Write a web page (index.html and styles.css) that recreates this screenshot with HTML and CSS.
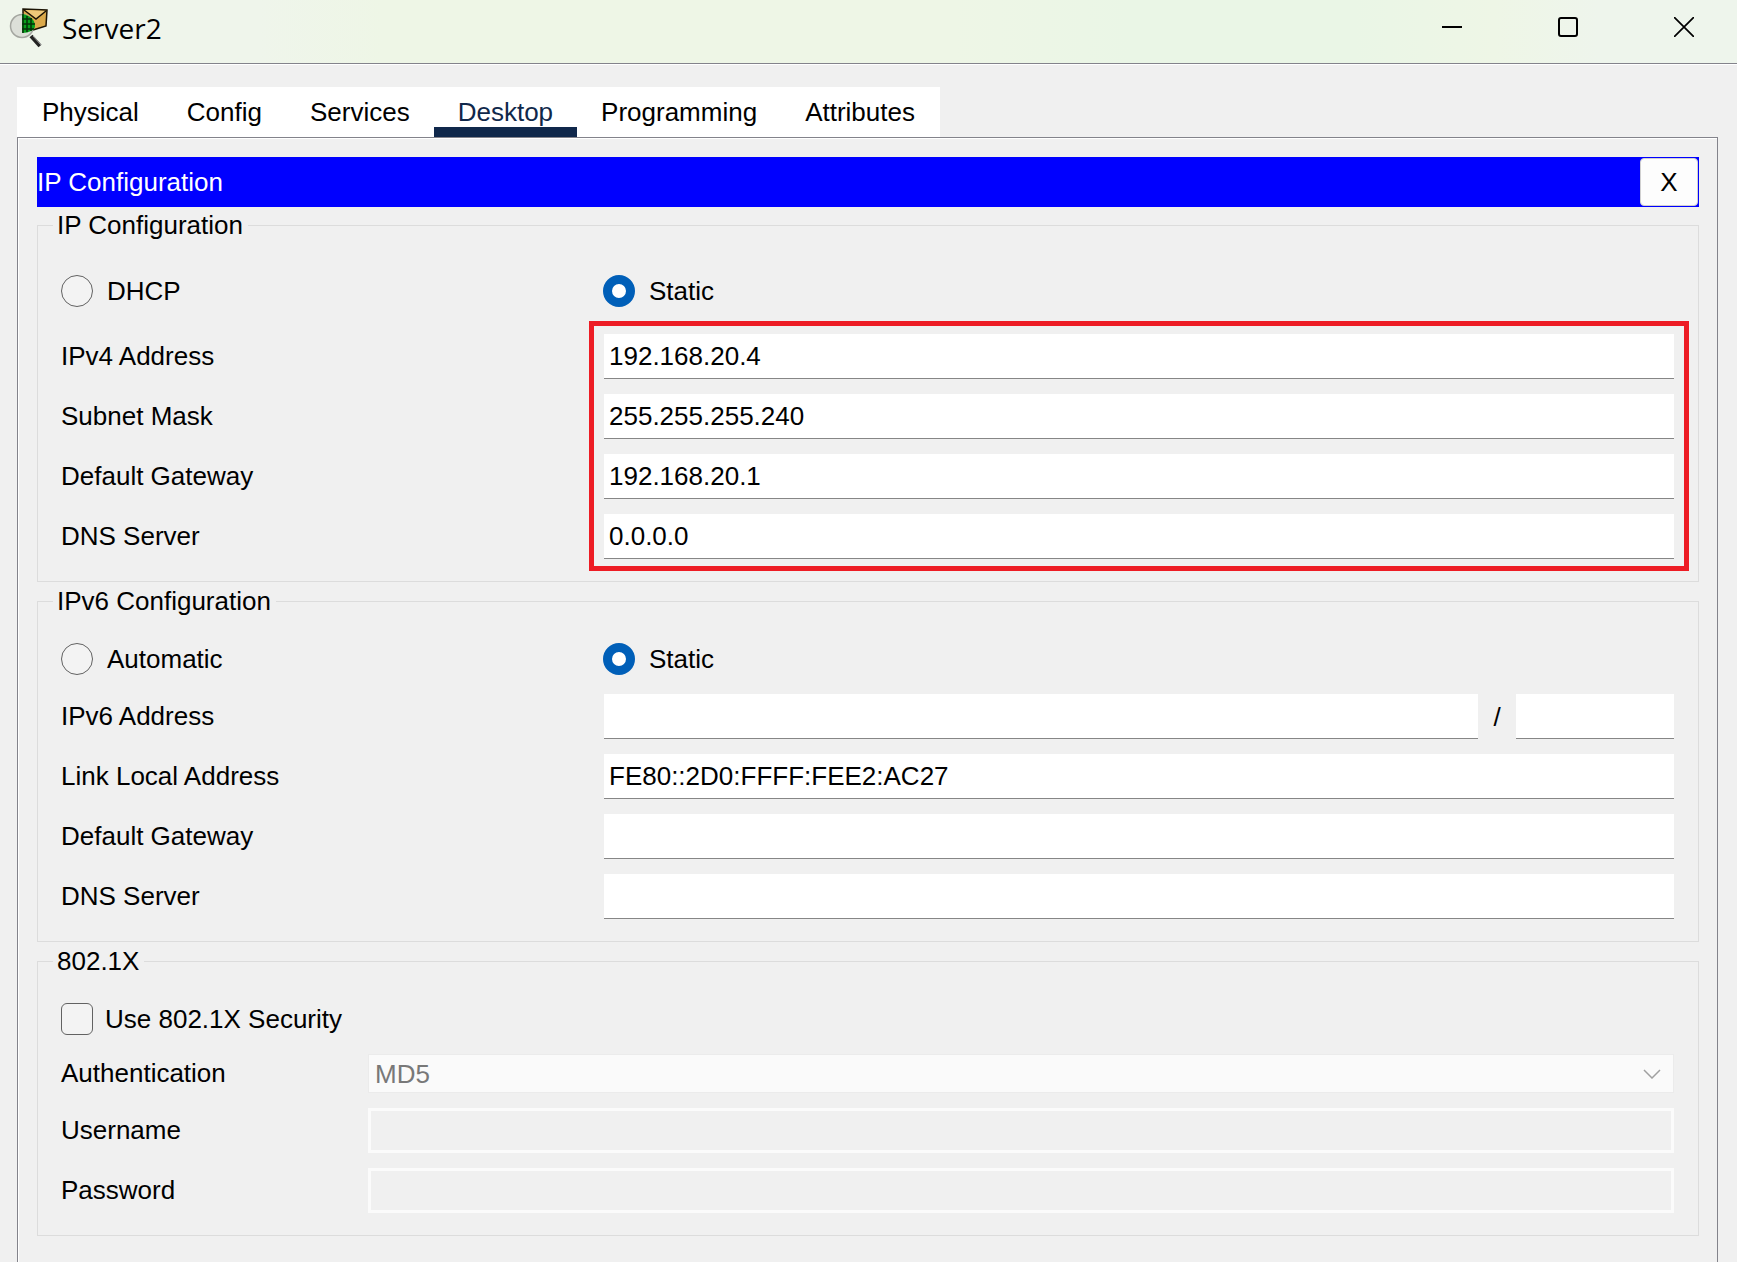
FILE: index.html
```html
<!DOCTYPE html>
<html lang="en">
<head>
    <meta charset="UTF-8">
    <meta name="viewport" content="width=device-width, initial-scale=1.0">
    <title>Server2</title>
    <link rel="stylesheet" href="styles.css">
</head>
<body>
    <header class="titlebar">
        <svg class="app-icon" viewBox="0 0 40 40">
            <path d="M14 1 L38 2 L37 18 L24 22 L14 26 Z" fill="#dba94a" stroke="#1c1405" stroke-width="1.5"/>
            <path d="M15 2 L27 11 L37 3" fill="#efc878" stroke="#1c1405" stroke-width="1.5"/>
            <circle cx="13" cy="18" r="11.5" fill="#dcdfd8" stroke="#a4a6a0" stroke-width="1.5"/>
            <path d="M13 6 C21 7 26 12 26 18 C26 22 20 25 13 25 Z" fill="#06a01a"/>
            <path d="M14 6 V25 M18 8 V24 M22 10 V23 M13 11 H23 M13 16 H26 M13 21 H25" stroke="#06300a" stroke-width="1.5" fill="none"/>
            <path d="M22 28 L31 38" stroke="#222" stroke-width="4"/>
            <path d="M24 28 L32 37" stroke="#999" stroke-width="1"/>
        </svg>
        <h1>Server2</h1>
        <div class="window-buttons">
            <button type="button" aria-label="Minimize"><svg viewBox="0 0 20 20"><path d="M0 10 H20" stroke-width="2"/></svg></button>
            <button type="button" aria-label="Maximize"><svg viewBox="0 0 20 20"><rect x="1" y="1" width="18" height="18" rx="2" stroke-width="2"/></svg></button>
            <button type="button" aria-label="Close"><svg viewBox="0 0 20 20"><path d="M0 0 L20 20 M20 0 L0 20" stroke-width="1.7"/></svg></button>
        </div>
    </header>

    <main class="content">
        <nav class="tabs">
            <button type="button">Physical</button>
            <button type="button">Config</button>
            <button type="button">Services</button>
            <button type="button" class="active">Desktop</button>
            <button type="button">Programming</button>
            <button type="button">Attributes</button>
        </nav>

        <form class="panel">
            <div class="panel-title">
                <h2>IP Configuration</h2>
                <button type="button">X</button>
            </div>

            <fieldset class="ipv4">
                <legend>IP Configuration</legend>
                <div class="options">
                    <label><input type="radio" name="ipv4-mode"> DHCP</label>
                    <label><input type="radio" name="ipv4-mode" checked> Static</label>
                </div>
                <div class="rows highlight">
                    <div class="row">
                        <label for="ipv4">IPv4 Address</label>
                        <input type="text" id="ipv4" value="192.168.20.4">
                    </div>
                    <div class="row">
                        <label for="mask">Subnet Mask</label>
                        <input type="text" id="mask" value="255.255.255.240">
                    </div>
                    <div class="row">
                        <label for="gateway">Default Gateway</label>
                        <input type="text" id="gateway" value="192.168.20.1">
                    </div>
                    <div class="row">
                        <label for="dns">DNS Server</label>
                        <input type="text" id="dns" value="0.0.0.0">
                    </div>
                </div>
            </fieldset>

            <fieldset>
                <legend>IPv6 Configuration</legend>
                <div class="options">
                    <label><input type="radio" name="ipv6-mode"> Automatic</label>
                    <label><input type="radio" name="ipv6-mode" checked> Static</label>
                </div>
                <div class="rows">
                    <div class="row">
                        <label for="ipv6">IPv6 Address</label>
                        <div class="address">
                            <input type="text" id="ipv6">
                            <span>/</span>
                            <input type="text" class="prefix" aria-label="Prefix length">
                        </div>
                    </div>
                    <div class="row">
                        <label for="link-local">Link Local Address</label>
                        <input type="text" id="link-local" value="FE80::2D0:FFFF:FEE2:AC27">
                    </div>
                    <div class="row">
                        <label for="gateway6">Default Gateway</label>
                        <input type="text" id="gateway6">
                    </div>
                    <div class="row">
                        <label for="dns6">DNS Server</label>
                        <input type="text" id="dns6">
                    </div>
                </div>
            </fieldset>

            <fieldset class="security">
                <legend>802.1X</legend>
                <div class="options">
                    <label><input type="checkbox"> Use 802.1X Security</label>
                </div>
                <div class="rows">
                    <div class="row">
                        <label for="auth">Authentication</label>
                        <div class="select">
                            <select id="auth" disabled>
                                <option>MD5</option>
                            </select>
                            <svg viewBox="0 0 18 10"><path d="M1 1 L9 9 L17 1"/></svg>
                        </div>
                    </div>
                    <div class="row">
                        <label for="username">Username</label>
                        <input type="text" id="username" disabled>
                    </div>
                    <div class="row">
                        <label for="password">Password</label>
                        <input type="password" id="password" disabled>
                    </div>
                </div>
            </fieldset>
        </form>
    </main>
</body>
</html>
```
FILE: styles.css
```css
* {
    box-sizing: border-box;
}

body {
    margin: 0;
    min-height: 100vh;
    display: flex;
    flex-direction: column;
    background: #f0f0f0;
    color: #000;
    font-family: "Liberation Sans", Arial, sans-serif;
    font-size: 26px;
    line-height: 30px;
}

button,
input,
select {
    font: inherit;
    color: inherit;
    margin: 0;
}

h1,
h2 {
    margin: 0;
    font-weight: normal;
}

/* title bar */
.titlebar {
    display: flex;
    align-items: center;
    height: 65px;
    padding: 0 23px 8px 9px;
    background: linear-gradient(to right, #eff5eb, #eff5eb 15%, #eef6e6 22%, #eef6e6 55%, #eaf6e6 65%, #eaf6e6 78%, #eef6e6 86%, #eef5ec 92%);
    border-bottom: 1px solid #fff;
    box-shadow: inset 0 -1px #83838b;
}

.app-icon {
    width: 40px;
    height: 40px;
}

.titlebar h1 {
    margin-left: 13px;
    font-family: "Open Sans", "Noto Sans", sans-serif;
    font-size: 28px;
}

.window-buttons {
    display: flex;
    gap: 56px;
    margin-left: auto;
    padding-bottom: 2px;
}

.window-buttons button {
    display: flex;
    justify-content: center;
    width: 60px;
    padding: 0;
    border: none;
    background: none;
}

.window-buttons svg {
    width: 20px;
    height: 20px;
    fill: none;
    stroke: #000;
}

/* tabs */
.content {
    flex: 1;
    display: flex;
    flex-direction: column;
    align-items: stretch;
    padding: 22px 19px 0 17px;
}

.tabs {
    display: flex;
    align-self: flex-start;
    padding: 0 1px;
    background: #fff;
}

.tabs button {
    height: 50px;
    padding: 0 24px;
    border: none;
    background: none;
}

.tabs .active {
    color: #10284b;
    box-shadow: inset 0 -10px #10284b;
}

.panel {
    flex: 1;
    padding: 19px 18px 26px 19px;
    border: 1px solid #83838b;
    border-bottom: none;
    box-shadow: inset 1px 1px #fff;
}

.panel-title {
    display: flex;
    align-items: center;
    justify-content: space-between;
    height: 50px;
    margin-bottom: 4px;
    padding: 1px 1px 1px 0;
    background: #0000ff;
    color: #fff;
}

.panel-title h2 {
    font-size: 26px;
}

.panel-title button {
    width: 58px;
    height: 48px;
    padding: 0;
    border: 1px solid #d0d0d0;
    border-radius: 4px;
    background: #fdfdfd;
    color: #000;
}

/* groups */
fieldset {
    min-width: 0;
    margin: 0 0 5px;
    padding: 27px 24px 22px 23px;
    border: 1px solid #dcdcdc;
}

fieldset.ipv4 {
    padding-top: 35px;
}

legend {
    margin-left: -8px;
    padding: 0 5px 0 4px;
    line-height: 29px;
}

.options,
.row {
    display: grid;
    grid-template-columns: 543px 1fr;
    align-items: center;
}

.options {
    grid-template-columns: 542px 1fr;
    margin-bottom: 19px;
}

.ipv4 .options {
    margin-bottom: 27px;
}

.options label {
    display: flex;
    align-items: center;
    gap: 14px;
    height: 32px;
    white-space: nowrap;
}

.security .options label {
    gap: 12px;
}

.rows {
    display: grid;
    gap: 15px;
}

.row > label {
    padding-bottom: 2px;
}

.security .row {
    grid-template-columns: 307px 1fr;
}

input[type="radio"],
input[type="checkbox"] {
    appearance: none;
    width: 32px;
    height: 32px;
    border: 1px solid #626262;
    border-radius: 50%;
    background: #f3f3f3;
}

input[type="checkbox"] {
    border-radius: 6px;
}

input[type="radio"]:checked {
    border: 9px solid #005fb8;
    background: #fff;
}

input[type="text"],
input[type="password"] {
    width: 100%;
    min-width: 0;
    height: 45px;
    padding: 0 5px;
    border: none;
    border-bottom: 1px solid #868686;
    background: #fff;
}

input[type="text"]:disabled,
input[type="password"]:disabled {
    border: 3px solid #fbfbfb;
    background: #f0f0f0;
}

.address {
    display: flex;
    align-items: center;
}

.address span {
    flex: 0 0 38px;
    text-align: center;
}

.address .prefix {
    flex: 0 0 158px;
    width: 158px;
}

.select {
    position: relative;
}

.select select {
    display: block;
    appearance: none;
    width: 100%;
    height: 39px;
    padding: 0 6px;
    border: 1px solid #ebebeb;
    border-radius: 0;
    background: #fafafa;
    color: #787878;
    opacity: 1;
}

.select svg {
    position: absolute;
    top: 15px;
    right: 13px;
    width: 18px;
    height: 10px;
    fill: none;
    stroke: #a0a0a0;
    stroke-width: 1.5;
}

/* red frame around the IPv4 values */
.highlight {
    position: relative;
}

.highlight::after {
    content: "";
    position: absolute;
    top: -13px;
    right: -15px;
    bottom: -12px;
    left: 528px;
    border: 5px solid #ed1c24;
    pointer-events: none;
}
```
